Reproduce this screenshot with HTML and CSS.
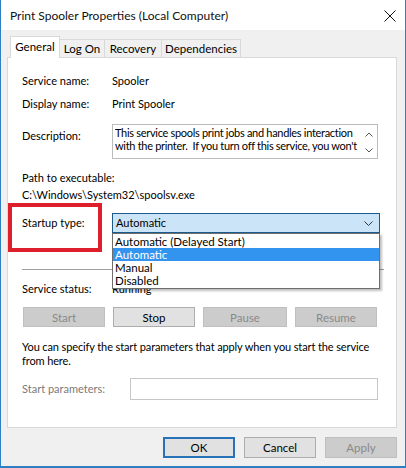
FILE: index.html
```
<!DOCTYPE html>
<html>
<head>
<meta charset="utf-8">
<link rel="stylesheet" href="styles.css">
</head>
<body>
<div class="window">
  <div class="titlebar">
    <span class="title">Print Spooler Properties (Local Computer)</span>
    <svg class="close" width="12" height="12" viewBox="0 0 12 12"><path d="M0.5 0.5 L11.5 11.5 M11.5 0.5 L0.5 11.5" stroke="#111" stroke-width="1" fill="none"/></svg>
  </div>
  <div class="client">
    <div class="tabs">
      <div class="tab active">General</div>
      <div class="tab">Log On</div>
      <div class="tab">Recovery</div>
      <div class="tab">Dependencies</div>
    </div>
    <div class="panel">
      <div class="row r1"><span class="label">Service name:</span><span>Spooler</span></div>
      <div class="row r2"><span class="label">Display name:</span><span>Print Spooler</span></div>
      <div class="row r3">
        <span class="label desc-label">Description:</span>
        <div class="descbox">
          <div class="desctext">This service spools print jobs and handles interaction<br>with the printer.&nbsp; If you turn off this service, you won't</div>
          <div class="scroll">
            <svg width="8" height="5" viewBox="0 0 8 5"><path d="M0.5 4.5 L4 1 L7.5 4.5" stroke="#555" fill="none"/></svg>
            <svg width="8" height="5" viewBox="0 0 8 5"><path d="M0.5 0.5 L4 4 L7.5 0.5" stroke="#555" fill="none"/></svg>
          </div>
        </div>
      </div>
      <div class="pathlabel">Path to executable:</div>
      <div class="pathvalue">C:\Windows\System32\spoolsv.exe</div>
      <div class="row startup">
        <span class="label">Startup type:</span>
        <div class="redbox"></div>
        <div class="combo">
          <span>Automatic</span>
          <svg width="9" height="6" viewBox="0 0 9 6"><path d="M0.5 0.5 L4.5 4.5 L8.5 0.5" stroke="#333" fill="none"/></svg>
          <ul class="dropdown">
            <li>Automatic (Delayed Start)</li>
            <li class="sel">Automatic</li>
            <li>Manual</li>
            <li>Disabled</li>
          </ul>
        </div>
      </div>
      <div class="separator"></div>
      <div class="row status"><span class="label">Service status:</span><span>Running</span></div>
      <div class="svcbuttons">
        <div class="btn disabled">Start</div>
        <div class="btn">Stop</div>
        <div class="btn disabled">Pause</div>
        <div class="btn disabled">Resume</div>
      </div>
      <p class="note">You can specify the start parameters that apply when you start the service<br>from here.</p>
      <div class="row params">
        <span class="label plabel">Start parameters:</span>
        <div class="input"></div>
      </div>
    </div>
    <div class="footer">
      <div class="btn fbtn ok">OK</div>
      <div class="btn fbtn">Cancel</div>
      <div class="btn fbtn disabled">Apply</div>
    </div>
  </div>
</div>
</body>
</html>
```
FILE: styles.css
```
* { box-sizing: border-box; }
html, body { margin: 0; padding: 0; }
body {
  font-family: Lato, "Liberation Sans", Arial, sans-serif;
  font-size: 11px;
  color: #000;
  background: #fff;
}
.window {
  width: 406px;
  height: 468px;
  border: 1px solid #2f7fc5;
  border-top: none;
  border-bottom-width: 2px;
  display: flex;
  flex-direction: column;
  background: #f0f0f0;
}
.titlebar {
  height: 30px;
  background: #fff;
  display: flex;
  align-items: center;
  justify-content: space-between;
  padding: 0 9px 0 9px;
  flex: none;
}
.title { font-size: 12px; color: #111; margin-top: 1px; }
.close { margin-top: 2px; }
.client { flex: 1; display: flex; flex-direction: column; padding: 0 8px 0 6px; }
.tabs {
  display: flex;
  align-items: flex-end;
  height: 27px;
  padding-left: 3px;
}
.tab {
  height: 18px;
  border: 1px solid #d9d9d9;
  border-bottom: none;
  margin-left: -1px;
  line-height: 17px;
  background: #f0f0f0;
  white-space: nowrap;
  text-align: center;
  padding: 0;
  font-size: 11.5px;
}
.tab.active {
  height: 22px;
  background: #fff;
  margin-bottom: -1px;
  position: relative;
  z-index: 1;
  line-height: 19px;
  margin-left: 0;
  width: 50px;
}
.tabs .tab:nth-child(2) { width: 46px; }
.tabs .tab:nth-child(3) { width: 58px; }
.tabs .tab:nth-child(4) { width: 80px; }
.panel {
  background: #fff;
  border: 1px solid #d9d9d9;
  height: 371px;
  padding: 16px 0 0 14px;
  flex: none;
  width: 390px;
}
.row { display: flex; align-items: center; line-height: 14px; }
.label { width: 90px; flex: none; }
.r1 { height: 14px; }
.r2 { height: 14px; margin-top: 9px; }
.r3 { margin-top: 13px; align-items: flex-start; }
.desc-label { margin-top: 5px; }
.descbox {
  width: 266px;
  height: 35px;
  border: 1px solid #bcbcbc;
  display: flex;
  padding: 1px 0 0 2px;
}
.desctext { flex: 1; line-height: 13px; height: 30px; overflow: hidden; white-space: nowrap; letter-spacing: -0.3px; }
.scroll {
  width: 16px;
  flex: none;
  display: flex;
  flex-direction: column;
  justify-content: space-between;
  align-items: center;
  padding: 6px 0 5px;
}
.pathlabel { margin-top: 12px; line-height: 14px; }
.pathvalue { margin-top: 3px; line-height: 14px; }
.startup { margin-top: 11px; position: relative; height: 20px; }
.redbox {
  position: absolute;
  left: -14px;
  top: -10px;
  width: 94px;
  height: 49px;
  border: 4px solid #dc1f2a;
}
.combo {
  position: relative;
  width: 268px;
  height: 20px;
  background: #cce4f7;
  border: 1px solid #1c5a8c;
  display: flex;
  align-items: center;
  justify-content: space-between;
  padding: 0 6px 0 3px;
}
.combo svg { margin-top: 1px; }
.dropdown {
  position: absolute;
  left: -1px;
  top: 19px;
  width: 268px;
  margin: 0;
  padding: 1px 0;
  list-style: none;
  background: #fff;
  border: 1px solid #6e6e6e;
  box-shadow: 2px 2px 2px rgba(0,0,0,0.25);
  z-index: 5;
}
.dropdown li { height: 13px; line-height: 13px; padding-left: 2px; font-size: 11.5px; }
.dropdown li.sel { background: #3394f0; color: #fff; }
.separator {
  height: 1px;
  background: #a0a0a0;
  width: 362px;
  margin-top: 36px;
}
.status { margin-top: 12px; height: 14px; }
.svcbuttons {
  display: flex;
  gap: 8px;
  margin-top: 11px;
  margin-left: 1px;
}
.btn {
  width: 82px;
  height: 20px;
  border: 1px solid #adadad;
  background: #e1e1e1;
  display: flex;
  align-items: center;
  justify-content: center;
  font-size: 11.5px;
}
.svcbuttons .btn:nth-child(3) { width: 84px; }
.btn.disabled { background: #cccccc; border-color: #bfbfbf; color: #8a8a8a; }
.note { margin: 13px 0 0; line-height: 14px; white-space: nowrap; letter-spacing: -0.12px; }
.params { margin-top: 10px; }
.plabel { width: 108px; color: #7a7a7a; }
.input { width: 248px; height: 22px; border: 1px solid #c7c7c7; background: #fff; }
.footer {
  display: flex;
  justify-content: flex-end;
  gap: 9px;
  margin-top: 9px;
}
.fbtn { width: 72px; height: 21px; }
.ok { border: 2px solid #2872b8; }
```
